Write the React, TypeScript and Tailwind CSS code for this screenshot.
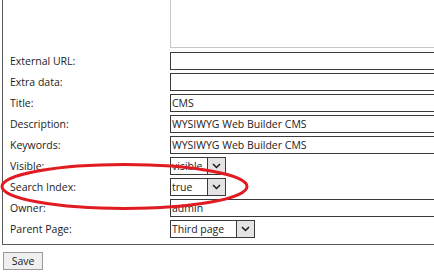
import React from "react";

type Row = {
  label: string;
  kind: "text" | "select";
  value: string;
  width?: string;
};

const rows: Row[] = [
  { label: "External URL:", kind: "text", value: "" },
  { label: "Extra data:", kind: "text", value: "" },
  { label: "Title:", kind: "text", value: "CMS" },
  { label: "Description:", kind: "text", value: "WYSIWYG Web Builder CMS" },
  { label: "Keywords:", kind: "text", value: "WYSIWYG Web Builder CMS" },
  { label: "Visible:", kind: "select", value: "visible", width: "w-[56px]" },
  { label: "Search Index:", kind: "select", value: "true", width: "w-[56px]" },
  { label: "Owner:", kind: "text", value: "admin" },
  { label: "Parent Page:", kind: "select", value: "Third page", width: "w-[85px]" },
];

const Chevron = () => (
  <svg width="9" height="6" viewBox="0 0 9 6" fill="none">
    <polyline points="1,1 4.5,4.5 8,1" stroke="#1a1a1a" strokeWidth="1.5" />
  </svg>
);

const FakeSelect = ({ value, width }: { value: string; width?: string }) => (
  <div className={`flex h-[18px] ${width} border border-[#3a3a3a] bg-white`}>
    <span className="flex-1 truncate pl-[1px] leading-[16px] text-[#222]">{value}</span>
    <span className="flex w-[18px] items-center justify-center border-l border-[#3a3a3a] bg-[#e4e4e4]">
      <Chevron />
    </span>
  </div>
);

export default function App() {
  return (
    <div className="relative h-[274px] w-[434px] overflow-hidden bg-white font-['Open_Sans',sans-serif] text-[10.5px] text-[#222]">
      <div className="ml-[2px] w-[600px] border-x border-b border-[#5a5a5a] pb-[6px] pl-[7px]">
        {/* tail of the content textarea above */}
        <div className="flex">
          <div className="w-[160px]" />
          <div className="h-[48px] flex-1 border-x border-b border-[#c8c8c8]" />
        </div>

        <div className="mt-[4px] flex flex-col gap-[3px]">
          {rows.map((row) => (
            <div key={row.label} className="flex h-[18px] items-center">
              <label className="w-[160px] leading-[18px]">{row.label}</label>
              {row.kind === "text" ? (
                <input
                  type="text"
                  readOnly
                  value={row.value}
                  className="h-[18px] w-[400px] border border-[#3a3a3a] px-[1px] text-[10.5px] leading-[16px] text-[#222] outline-none"
                />
              ) : (
                <FakeSelect value={row.value} width={row.width} />
              )}
            </div>
          ))}
        </div>
      </div>

      <button className="ml-[3px] mt-[7px] h-[18px] w-[40px] border border-[#9a9a9a] bg-[#efefef] text-[10.5px] leading-[16px] text-[#222]">
        Save
      </button>

      {/* hand-drawn highlight */}
      <svg
        className="pointer-events-none absolute left-0 top-0"
        width="434"
        height="274"
        viewBox="0 0 434 274"
      >
        <ellipse
          cx="124.5"
          cy="186.5"
          rx="122.5"
          ry="22"
          fill="none"
          stroke="#e01b22"
          strokeWidth="3"
        />
      </svg>
    </div>
  );
}
